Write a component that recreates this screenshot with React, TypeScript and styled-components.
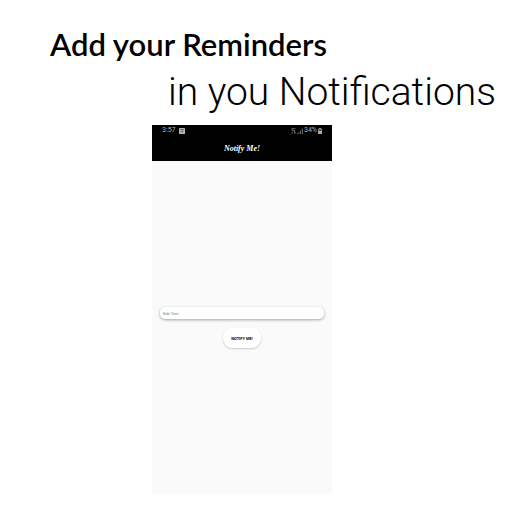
import * as React from 'react';
import styled, { createGlobalStyle } from 'styled-components';

const GlobalStyle = createGlobalStyle`
  * {
    box-sizing: border-box;
  }
  body {
    margin: 0;
    background: #fff;
    color: #000;
    font-family: Roboto, sans-serif;
  }
`;

const Page = styled.main`
  display: flex;
  flex-direction: column;
  padding: 24px 16px 18px;
`;

const Headline = styled.h1`
  display: flex;
  flex-direction: column;
  margin: 0 0 5px;
  font-weight: 400;
`;

const LeadLine = styled.span`
  padding-left: 34px;
  font-family: Lato, sans-serif;
  font-size: 31px;
  font-weight: 600;
  line-height: 40px;
  white-space: nowrap;
`;

const MainLine = styled.span`
  align-self: flex-end;
  font-family: Roboto, sans-serif;
  font-size: 39px;
  font-weight: 300;
  line-height: 56px;
  white-space: nowrap;
`;

const Phone = styled.section`
  display: flex;
  flex-direction: column;
  width: 37.5%;
  margin-left: 136px;
  background: #fafafa;
`;

const AppHeader = styled.header`
  display: flex;
  flex-direction: column;
  height: 36px;
  background: #000;
  color: #fff;
`;

const StatusBar = styled.div`
  display: flex;
  align-items: center;
  justify-content: space-between;
  padding: 0 10px;
  color: #b4b4b4;
  font-size: 7px;
  line-height: 11px;
`;

const StatusGroup = styled.div<{ $gap: number }>`
  display: flex;
  align-items: center;
  gap: ${({ $gap }): number => $gap}px;
`;

const AppTitle = styled.h2`
  margin: 0;
  font-family: 'Liberation Serif', serif;
  font-size: 8px;
  font-style: italic;
  font-weight: 700;
  line-height: 25px;
  text-align: center;
`;

const ReminderForm = styled.form`
  display: flex;
  flex-direction: column;
  align-items: center;
  gap: 9px;
  padding: 146px 8px;
`;

const ReminderInput = styled.input`
  width: 100%;
  height: 12px;
  padding: 0 3px;
  border: 0;
  border-radius: 5px;
  background: #fff;
  box-shadow: 0 1px 3px rgba(0, 0, 0, 0.35);
  font-family: Roboto, sans-serif;
  font-size: 4px;
  &::placeholder {
    color: #5d7f84;
    opacity: 1;
  }
`;

const NotifyButton = styled.button`
  height: 20px;
  padding: 0 8px;
  border: 0;
  border-radius: 9px;
  background: #fff;
  box-shadow: 0 1px 2px rgba(0, 0, 0, 0.2);
  color: #000;
  font-family: Roboto, sans-serif;
  font-size: 4px;
  font-weight: 700;
`;

const ImageIcon: React.FC = () => (
  <svg width="6" height="6" viewBox="0 0 6 6" aria-hidden="true">
    <rect width="6" height="6" rx="0.6" fill="#b4b4b4" />
    <path d="M1.3 1.6h3.4M1.6 2.8L3 4.3l1.4-1.5" stroke="#333" strokeWidth="0.7" fill="none" />
  </svg>
);

const DataIcon: React.FC = () => (
  <svg width="5" height="6" viewBox="0 0 5 6" aria-hidden="true">
    <path d="M0.5 0.7h4M1 2.7h3M0.5 5h1.6M3 5h1.5M1.2 0.7v2M3.8 2.7V5" stroke="#999" strokeWidth="0.7" fill="none" />
  </svg>
);

const SignalIcon: React.FC = () => (
  <svg width="6" height="6" viewBox="0 0 6 6" aria-hidden="true">
    <path d="M0.5 6V5M2 6V4M3.5 6V2.5" stroke="#777" strokeWidth="0.8" />
    <path d="M5.3 6V0.5" stroke="#999" strokeWidth="0.8" />
  </svg>
);

const BatteryIcon: React.FC = () => (
  <svg width="4" height="6" viewBox="0 0 4 6" aria-hidden="true">
    <path d="M1.2 0h1.6v0.8H4V6H0V0.8h1.2z" fill="#aaa" />
    <path d="M0.6 1.4h2.8v1.4H0.6z" fill="#333" />
  </svg>
);

const App: React.FC = () => (
  <>
    <GlobalStyle />
    <Page>
      <Headline>
        <LeadLine>Add your Reminders</LeadLine>
        <MainLine>in you Notifications</MainLine>
      </Headline>
      <Phone>
        <AppHeader>
          <StatusBar>
            <StatusGroup $gap={3}>
              <span>3:57</span>
              <ImageIcon />
            </StatusGroup>
            <StatusGroup $gap={1}>
              <DataIcon />
              <SignalIcon />
              <span>34%</span>
              <BatteryIcon />
            </StatusGroup>
          </StatusBar>
          <AppTitle>Notify Me!</AppTitle>
        </AppHeader>
        <ReminderForm onSubmit={(event): void => event.preventDefault()}>
          <ReminderInput type="text" aria-label="Edit Text" placeholder="Edit Text" />
          <NotifyButton type="submit">NOTIFY ME!</NotifyButton>
        </ReminderForm>
      </Phone>
    </Page>
  </>
);

export default App;
